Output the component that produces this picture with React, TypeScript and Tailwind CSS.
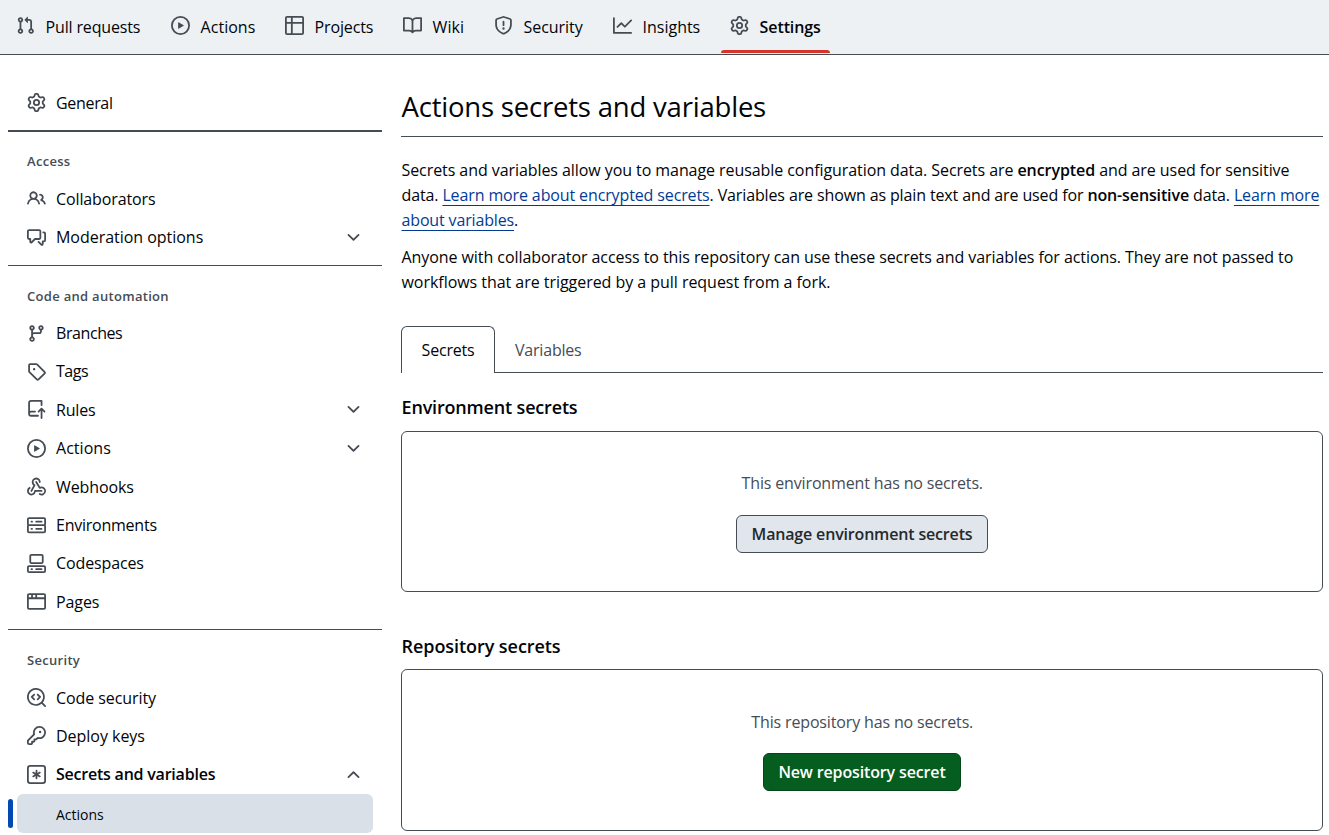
import clsx from "clsx";

// 16px icon outlines, drawn on a 16x16 grid
const icons = {
  pullRequest:
    "M1.5 3.25a2.25 2.25 0 1 1 3 2.122v5.256a2.251 2.251 0 1 1-1.5 0V5.372A2.25 2.25 0 0 1 1.5 3.25Zm5.677-.177L9.573.677A.25.25 0 0 1 10 .854V2.5h1A2.5 2.5 0 0 1 13.5 5v5.628a2.251 2.251 0 1 1-1.5 0V5a1 1 0 0 0-1-1h-1v1.646a.25.25 0 0 1-.427.177L7.177 3.427a.25.25 0 0 1 0-.354ZM3.75 2.5a.75.75 0 1 0 0 1.5.75.75 0 0 0 0-1.5Zm0 9.5a.75.75 0 1 0 0 1.5.75.75 0 0 0 0-1.5Zm8.25.75a.75.75 0 1 0 1.5 0 .75.75 0 0 0-1.5 0Z",
  play: "M8 0a8 8 0 1 1 0 16A8 8 0 0 1 8 0ZM1.5 8a6.5 6.5 0 1 0 13 0 6.5 6.5 0 0 0-13 0Zm4.879-2.773 4.264 2.559a.25.25 0 0 1 0 .428l-4.264 2.559A.25.25 0 0 1 6 10.559V5.442a.25.25 0 0 1 .379-.215Z",
  table:
    "M0 1.75C0 .784.784 0 1.75 0h12.5C15.216 0 16 .784 16 1.75v12.5A1.75 1.75 0 0 1 14.25 16H1.75A1.75 1.75 0 0 1 0 14.25ZM6.5 6.5v8h7.75a.25.25 0 0 0 .25-.25V6.5Zm8-1.5V1.75a.25.25 0 0 0-.25-.25H6.5V5Zm-13 1.5v7.75c0 .138.112.25.25.25H5v-8ZM5 5V1.5H1.75a.25.25 0 0 0-.25.25V5Z",
  book: "M0 1.75A.75.75 0 0 1 .75 1h4.253c1.227 0 2.317.59 3 1.501A3.743 3.743 0 0 1 11.006 1h4.245a.75.75 0 0 1 .75.75v10.5a.75.75 0 0 1-.75.75h-4.507a2.25 2.25 0 0 0-1.591.659l-.622.621a.75.75 0 0 1-1.06 0l-.622-.621A2.25 2.25 0 0 0 5.258 13H.75a.75.75 0 0 1-.75-.75Zm7.251 10.324.004-5.073-.002-2.253A2.25 2.25 0 0 0 5.003 2.5H1.5v9h3.757a3.75 3.75 0 0 1 1.994.574ZM8.755 4.75l-.004 7.322a3.752 3.752 0 0 1 1.992-.572H14.5v-9h-3.495a2.25 2.25 0 0 0-2.25 2.25Z",
  shield:
    "M7.467.133a1.748 1.748 0 0 1 1.066 0l5.25 1.68A1.75 1.75 0 0 1 15 3.48V7c0 1.566-.32 3.182-1.303 4.682-.983 1.498-2.585 2.813-5.032 3.855a1.697 1.697 0 0 1-1.33 0c-2.447-1.042-4.049-2.357-5.032-3.855C1.32 10.182 1 8.566 1 7V3.48a1.75 1.75 0 0 1 1.217-1.667Zm.61 1.429a.25.25 0 0 0-.153 0l-5.25 1.68a.25.25 0 0 0-.174.238V7c0 1.358.275 2.666 1.057 3.86.784 1.194 2.121 2.34 4.366 3.297a.196.196 0 0 0 .154 0c2.245-.956 3.582-2.104 4.366-3.298C13.225 9.666 13.5 8.36 13.5 7V3.48a.251.251 0 0 0-.174-.237l-5.25-1.68ZM8.75 4.75v3a.75.75 0 0 1-1.5 0v-3a.75.75 0 0 1 1.5 0ZM9 10.5a1 1 0 1 1-2 0 1 1 0 0 1 2 0Z",
  graph:
    "M1.5 1.75V13.5h13.75a.75.75 0 0 1 0 1.5H.75a.75.75 0 0 1-.75-.75V1.75a.75.75 0 0 1 1.5 0Zm14.28 2.53-5.25 5.25a.75.75 0 0 1-1.06 0L7 7.06 4.28 9.78a.751.751 0 0 1-1.042-.018.751.751 0 0 1-.018-1.042l3.25-3.25a.75.75 0 0 1 1.06 0L10 7.94l4.72-4.72a.751.751 0 0 1 1.042.018.751.751 0 0 1 .018 1.042Z",
  gear: "M8 0a8.2 8.2 0 0 1 .701.031C9.444.095 9.99.645 10.16 1.29l.288 1.107c.018.066.079.158.212.224.231.114.454.243.668.386.123.082.233.09.299.071l1.103-.303c.644-.176 1.392.021 1.82.63.27.385.506.792.704 1.218.315.675.111 1.422-.364 1.891l-.814.806c-.049.048-.098.147-.088.294.016.257.016.515 0 .772-.01.147.038.246.088.294l.814.806c.475.469.679 1.216.364 1.891a7.977 7.977 0 0 1-.704 1.217c-.428.61-1.176.807-1.82.63l-1.102-.302c-.067-.019-.177-.011-.3.071a5.909 5.909 0 0 1-.668.386c-.133.066-.194.158-.211.224l-.29 1.106c-.168.646-.715 1.196-1.458 1.26a8.006 8.006 0 0 1-1.402 0c-.743-.064-1.289-.614-1.458-1.26l-.289-1.106c-.018-.066-.079-.158-.212-.224a5.738 5.738 0 0 1-.668-.386c-.123-.082-.233-.09-.299-.071l-1.103.303c-.644.176-1.392-.021-1.82-.63a8.12 8.12 0 0 1-.704-1.218c-.315-.675-.111-1.422.363-1.891l.815-.806c.05-.048.098-.147.088-.294a6.214 6.214 0 0 1 0-.772c.01-.147-.038-.246-.088-.294l-.815-.806C.635 6.045.431 5.298.746 4.623a7.92 7.92 0 0 1 .704-1.217c.428-.61 1.176-.807 1.82-.63l1.102.302c.067.019.177.011.3-.071.214-.143.437-.272.668-.386.133-.066.194-.158.211-.224l.29-1.106C6.009.645 6.556.095 7.299.03 7.53.01 7.764 0 8 0Zm-.571 1.525c-.036.003-.108.036-.137.146l-.289 1.105c-.147.561-.549.967-.998 1.189-.173.086-.34.183-.5.29-.417.278-.97.423-1.529.27l-1.103-.303c-.109-.03-.175.016-.195.045-.22.312-.412.644-.573.99-.014.031-.021.11.059.19l.815.806c.411.406.562.957.53 1.456a4.709 4.709 0 0 0 0 .582c.032.499-.119 1.05-.53 1.456l-.815.806c-.081.08-.073.159-.059.19.162.346.353.677.573.989.02.03.085.076.195.046l1.102-.303c.56-.153 1.113-.008 1.53.27.161.107.328.204.501.29.447.222.85.629.997 1.189l.289 1.105c.029.109.101.143.137.146a6.6 6.6 0 0 0 1.142 0c.036-.003.108-.036.137-.146l.289-1.105c.147-.561.549-.967.998-1.189.173-.086.34-.183.5-.29.417-.278.97-.423 1.529-.27l1.103.303c.109.029.175-.016.195-.045.22-.313.411-.644.573-.99.014-.031.021-.11-.059-.19l-.815-.806c-.411-.406-.562-.957-.53-1.456a4.709 4.709 0 0 0 0-.582c-.032-.499.119-1.05.53-1.456l.815-.806c.081-.08.073-.159.059-.19a6.464 6.464 0 0 0-.573-.989c-.02-.03-.085-.076-.195-.046l-1.102.303c-.56.153-1.113.008-1.53-.27a4.44 4.44 0 0 0-.501-.29c-.447-.222-.85-.629-.997-1.189l-.289-1.105c-.029-.11-.101-.143-.137-.146a6.6 6.6 0 0 0-1.142 0ZM11 8a3 3 0 1 1-6 0 3 3 0 0 1 6 0ZM9.5 8a1.5 1.5 0 1 0-3.001.001A1.5 1.5 0 0 0 9.5 8Z",
  people:
    "M2 5.5a3.5 3.5 0 1 1 5.898 2.549 5.508 5.508 0 0 1 3.034 4.084.75.75 0 1 1-1.482.235 4 4 0 0 0-7.9 0 .75.75 0 0 1-1.482-.236A5.507 5.507 0 0 1 3.102 8.05 3.493 3.493 0 0 1 2 5.5ZM11 4a3.001 3.001 0 0 1 2.22 5.018 5.01 5.01 0 0 1 2.56 3.012.749.749 0 0 1-.885.954.752.752 0 0 1-.549-.514 3.507 3.507 0 0 0-2.522-2.372.75.75 0 0 1-.574-.73v-.352a.75.75 0 0 1 .416-.672A1.5 1.5 0 0 0 11 5.5.75.75 0 0 1 11 4Zm-5.5-.5a2 2 0 1 0-.001 3.999A2 2 0 0 0 5.5 3.5Z",
  discussion:
    "M1.75 1h8.5c.966 0 1.75.784 1.75 1.75v5.5A1.75 1.75 0 0 1 10.25 10H7.061l-2.574 2.573A1.458 1.458 0 0 1 2 11.543V10h-.25A1.75 1.75 0 0 1 0 8.25v-5.5C0 1.784.784 1 1.75 1ZM1.5 2.75v5.5c0 .138.112.25.25.25h1a.75.75 0 0 1 .75.75v2.19l2.72-2.72a.749.749 0 0 1 .53-.22h3.5a.25.25 0 0 0 .25-.25v-5.5a.25.25 0 0 0-.25-.25h-8.5a.25.25 0 0 0-.25.25Zm13 2a.25.25 0 0 0-.25-.25h-.5a.75.75 0 0 1 0-1.5h.5c.966 0 1.75.784 1.75 1.75v5.5A1.75 1.75 0 0 1 14.25 12H14v1.543a1.458 1.458 0 0 1-2.487 1.03L9.22 12.28a.749.749 0 0 1 .326-1.275.749.749 0 0 1 .734.215l2.22 2.22v-2.19a.75.75 0 0 1 .75-.75h1a.25.25 0 0 0 .25-.25Z",
  branch:
    "M9.5 3.25a2.25 2.25 0 1 1 3 2.122V6A2.5 2.5 0 0 1 10 8.5H6a1 1 0 0 0-1 1v1.128a2.251 2.251 0 1 1-1.5 0V5.372a2.25 2.25 0 1 1 1.5 0v1.836A2.493 2.493 0 0 1 6 7h4a1 1 0 0 0 1-1v-.628A2.25 2.25 0 0 1 9.5 3.25Zm-6 0a.75.75 0 1 0 1.5 0 .75.75 0 0 0-1.5 0Zm8.25-.75a.75.75 0 1 0 0 1.5.75.75 0 0 0 0-1.5ZM4.25 12a.75.75 0 1 0 0 1.5.75.75 0 0 0 0-1.5Z",
  tag: "M1 7.775V2.75C1 1.784 1.784 1 2.75 1h5.025c.464 0 .91.184 1.238.513l6.25 6.25a1.75 1.75 0 0 1 0 2.474l-5.026 5.026a1.75 1.75 0 0 1-2.474 0l-6.25-6.25A1.752 1.752 0 0 1 1 7.775Zm1.5 0c0 .066.026.13.073.177l6.25 6.25a.25.25 0 0 0 .354 0l5.025-5.025a.25.25 0 0 0 0-.354l-6.25-6.25a.25.25 0 0 0-.177-.073H2.75a.25.25 0 0 0-.25.25ZM6 5a1 1 0 1 1 0 2 1 1 0 0 1 0-2Z",
  repoPush:
    "M1 2.5A2.5 2.5 0 0 1 3.5 0h8.75a.75.75 0 0 1 .75.75v3.5a.75.75 0 0 1-1.5 0V1.5h-8a1 1 0 0 0-1 1v6.708A2.493 2.493 0 0 1 3.5 9h3.25a.75.75 0 0 1 0 1.5H3.5a1 1 0 0 0 0 2h5.75a.75.75 0 0 1 0 1.5H3.5A2.5 2.5 0 0 1 1 11.5Zm13.23 7.79h-.001l-1.224-1.224v6.184a.75.75 0 0 1-1.5 0V9.066L10.28 10.29a.75.75 0 0 1-1.06-1.061l2.505-2.504a.75.75 0 0 1 1.06 0L15.29 9.23a.751.751 0 0 1-.018 1.042.751.751 0 0 1-1.042.018Z",
  webhook:
    "M5.5 4.25a2.25 2.25 0 0 1 4.5 0 .75.75 0 0 0 1.5 0 3.75 3.75 0 1 0-6.14 2.889l-2.272 4.258a.75.75 0 0 0 1.324.706L7 7.25a.75.75 0 0 0-.309-1.015A2.25 2.25 0 0 1 5.5 4.25ZM7.364 3.607a.75.75 0 0 1 1.03.257l2.608 4.349a3.75 3.75 0 1 1-.628 6.785.75.75 0 0 1 .752-1.299 2.25 2.25 0 1 0-.033-3.88.75.75 0 0 1-1.03-.256L7.107 4.636a.75.75 0 0 1 .257-1.03ZM2.9 8.776A.75.75 0 0 1 2.625 9.8 2.25 2.25 0 1 0 6 11.75a.75.75 0 0 1 .75-.751h5.5a.75.75 0 0 1 0 1.5H7.425a3.75 3.75 0 1 1-5.55-3.998.75.75 0 0 1 1.024.274Z",
  server:
    "M1.75 1h12.5c.966 0 1.75.784 1.75 1.75v4c0 .372-.116.717-.314 1 .198.283.314.628.314 1v4a1.75 1.75 0 0 1-1.75 1.75H1.75A1.75 1.75 0 0 1 0 12.75v-4c0-.358.109-.707.314-1a1.739 1.739 0 0 1-.314-1v-4C0 1.784.784 1 1.75 1ZM1.5 2.75v4c0 .138.112.25.25.25h12.5a.25.25 0 0 0 .25-.25v-4a.25.25 0 0 0-.25-.25H1.75a.25.25 0 0 0-.25.25Zm.25 5.75a.25.25 0 0 0-.25.25v4c0 .138.112.25.25.25h12.5a.25.25 0 0 0 .25-.25v-4a.25.25 0 0 0-.25-.25ZM7 4.75A.75.75 0 0 1 7.75 4h4.5a.75.75 0 0 1 0 1.5h-4.5A.75.75 0 0 1 7 4.75ZM7.75 10h4.5a.75.75 0 0 1 0 1.5h-4.5a.75.75 0 0 1 0-1.5ZM3 4.75A.75.75 0 0 1 3.75 4h.5a.75.75 0 0 1 0 1.5h-.5A.75.75 0 0 1 3 4.75ZM3.75 10h.5a.75.75 0 0 1 0 1.5h-.5a.75.75 0 0 1 0-1.5Z",
  codespaces:
    "M0 11.25c0-.966.784-1.75 1.75-1.75h12.5c.966 0 1.75.784 1.75 1.75v3A1.75 1.75 0 0 1 14.25 16H1.75A1.75 1.75 0 0 1 0 14.25Zm2-9.5C2 .784 2.784 0 3.75 0h8.5C13.216 0 14 .784 14 1.75v5a1.75 1.75 0 0 1-1.75 1.75h-8.5A1.75 1.75 0 0 1 2 6.75Zm1.75-.25a.25.25 0 0 0-.25.25v5c0 .138.112.25.25.25h8.5a.25.25 0 0 0 .25-.25v-5a.25.25 0 0 0-.25-.25Zm-2 9.5a.25.25 0 0 0-.25.25v3c0 .138.112.25.25.25h12.5a.25.25 0 0 0 .25-.25v-3a.25.25 0 0 0-.25-.25ZM7 12.75a.75.75 0 0 1 .75-.75h4.5a.75.75 0 0 1 0 1.5h-4.5a.75.75 0 0 1-.75-.75Zm-4 0a.75.75 0 0 1 .75-.75h.5a.75.75 0 0 1 0 1.5h-.5a.75.75 0 0 1-.75-.75Z",
  browser:
    "M0 2.75C0 1.784.784 1 1.75 1h12.5c.966 0 1.75.784 1.75 1.75v10.5A1.75 1.75 0 0 1 14.25 15H1.75A1.75 1.75 0 0 1 0 13.25ZM14.5 6h-13v7.25c0 .138.112.25.25.25h12.5a.25.25 0 0 0 .25-.25Zm-6-3.5v2h6V2.75a.25.25 0 0 0-.25-.25ZM5 2.5v2h2v-2Zm-3.25 0a.25.25 0 0 0-.25.25V4.5h2v-2Z",
  codescan:
    "M8.47 4.97a.75.75 0 0 0 0 1.06L9.94 7.5 8.47 8.97a.75.75 0 1 0 1.06 1.06l2-2a.75.75 0 0 0 0-1.06l-2-2a.75.75 0 0 0-1.06 0ZM6.53 6.03a.75.75 0 0 0-1.06-1.06l-2 2a.75.75 0 0 0 0 1.06l2 2a.75.75 0 1 0 1.06-1.06L5.06 7.5l1.47-1.47ZM12.246 13.307a7.501 7.501 0 1 1 1.06-1.06l2.474 2.473a.749.749 0 0 1-.326 1.275.749.749 0 0 1-.734-.215ZM1.5 7.5a6.002 6.002 0 0 0 3.608 5.504 6.002 6.002 0 0 0 6.486-1.117.748.748 0 0 1 .292-.293A6 6 0 1 0 1.5 7.5Z",
  key: "M10.5 0a5.499 5.499 0 1 1-1.288 10.848l-.932.932a.749.749 0 0 1-.53.22H7v.75a.749.749 0 0 1-.22.53l-.5.5a.749.749 0 0 1-.53.22H5v.75a.749.749 0 0 1-.22.53l-.5.5a.749.749 0 0 1-.53.22h-2A1.75 1.75 0 0 1 0 14.25v-2c0-.199.079-.389.22-.53l4.932-4.932A5.5 5.5 0 0 1 10.5 0Zm-4 5.5c-.001.431.069.86.205 1.269a.75.75 0 0 1-.181.768L1.5 12.56v1.69c0 .138.112.25.25.25h1.69l.06-.06v-1.19a.75.75 0 0 1 .75-.75h1.19l.06-.06v-1.19a.75.75 0 0 1 .75-.75h1.19l1.023-1.025a.75.75 0 0 1 .768-.18A4 4 0 1 0 6.5 5.5ZM11 6a1 1 0 1 1 0-2 1 1 0 0 1 0 2Z",
  asterisk:
    "M0 2.75A2.75 2.75 0 0 1 2.75 0h10.5A2.75 2.75 0 0 1 16 2.75v10.5A2.75 2.75 0 0 1 13.25 16H2.75A2.75 2.75 0 0 1 0 13.25ZM2.75 1.5c-.69 0-1.25.56-1.25 1.25v10.5c0 .69.56 1.25 1.25 1.25h10.5c.69 0 1.25-.56 1.25-1.25V2.75c0-.69-.56-1.25-1.25-1.25ZM8 4a.75.75 0 0 1 .75.75V6.7l1.69-.975a.75.75 0 0 1 .75 1.3L9.5 8l1.69.976a.75.75 0 0 1-.75 1.298L8.75 9.3v1.951a.75.75 0 0 1-1.5 0V9.299l-1.69.976a.75.75 0 0 1-.75-1.3L6.5 8l-1.69-.975a.75.75 0 0 1 .75-1.3l1.69.976V4.75A.75.75 0 0 1 8 4Z",
  chevron:
    "M12.78 5.22a.749.749 0 0 1 0 1.06l-4.25 4.25a.749.749 0 0 1-1.06 0L3.22 6.28a.749.749 0 1 1 1.06-1.06L8 8.939l3.72-3.719a.749.749 0 0 1 1.06 0Z",
};

type IconName = keyof typeof icons;

function Icon({ name, className }: { name: IconName; className?: string }) {
  return (
    <svg
      viewBox="0 0 16 16"
      className={clsx("size-[19px] shrink-0 fill-[#454c54]", className)}
    >
      <path d={icons[name]} />
    </svg>
  );
}

interface TabProps {
  icon: IconName;
  label: string;
  className: string;
  active?: boolean;
}

const tabs: TabProps[] = [
  { icon: "pullRequest", label: "Pull requests", className: "w-[155px] tracking-[-0.16px]" },
  { icon: "play", label: "Actions", className: "w-[114px] tracking-[0.02px]" },
  { icon: "table", label: "Projects", className: "w-[118px] tracking-[-0.14px]" },
  { icon: "book", label: "Wiki", className: "w-[91px] tracking-[0.1px]" },
  { icon: "shield", label: "Security", className: "w-[119px] tracking-[-0.06px]" },
  { icon: "graph", label: "Insights", className: "w-[117px] tracking-[-0.02px]" },
  { icon: "gear", label: "Settings", className: "w-[109px] tracking-[-0.1px]", active: true },
];

function Tab({ icon, label, className, active }: TabProps) {
  return (
    <a className={clsx("relative flex h-[53px] items-center pl-[9px]", className)}>
      <Icon name={icon} className="mr-[10.6px] -mt-[2px]" />
      <span className={clsx(active && "font-semibold")}>{label}</span>
      {active && (
        <span className="absolute inset-x-0 bottom-0 h-[3px] rounded-t-sm bg-[#d5342a]" />
      )}
    </a>
  );
}

interface NavItemProps {
  icon: IconName;
  label: string;
  chevron?: "up" | "down";
  className?: string;
}

function NavItem({ icon, label, chevron, className }: NavItemProps) {
  return (
    <li className="flex h-[38.4px] items-center pr-[19px] pl-[19px]">
      <Icon name={icon} className="mr-[10px]" />
      <span className={clsx("flex-1", className ?? "tracking-[-0.2px]")}>{label}</span>
      {chevron && <Icon name="chevron" className={clsx(chevron === "up" && "rotate-180")} />}
    </li>
  );
}

function NavTitle({ children }: { children: string }) {
  return (
    <h3 className="flex h-[38px] items-center pl-[19px] text-[13px] font-semibold tracking-[0.3px] text-[#454c54]">
      {children}
    </h3>
  );
}

function Sidebar() {
  return (
    <aside className="ml-2 w-[374px] shrink-0 pt-[29.3px]">
      <ul>
        <NavItem icon="gear" label="General" className="tracking-[-0.32px]" />
      </ul>
      <div className="mt-[8.3px] h-[2px] bg-[#454c54]" />

      <div className="pt-[10px]">
        <NavTitle>Access</NavTitle>
        <ul className="-mt-[1px]">
          <NavItem icon="people" label="Collaborators" className="tracking-[-0.12px]" />
          <NavItem
            icon="discussion"
            label="Moderation options"
            chevron="down"
            className="tracking-[-0.03px]"
          />
        </ul>
      </div>
      <div className="mt-[9.2px] h-px bg-[#454c54]" />

      <div className="pt-[10.8px]">
        <NavTitle>Code and automation</NavTitle>
        <ul className="-mt-[1.4px]">
          <NavItem icon="branch" label="Branches" className="tracking-[-0.42px]" />
          <NavItem icon="tag" label="Tags" className="tracking-[-0.45px]" />
          <NavItem icon="repoPush" label="Rules" chevron="down" />
          <NavItem icon="play" label="Actions" chevron="down" className="tracking-[0.03px]" />
          <NavItem icon="webhook" label="Webhooks" className="tracking-[-0.1px]" />
          <NavItem icon="server" label="Environments" className="tracking-[-0.24px]" />
          <NavItem icon="codespaces" label="Codespaces" className="tracking-[-0.12px]" />
          <NavItem icon="browser" label="Pages" className="tracking-[-0.1px]" />
        </ul>
      </div>
      <div className="mt-[8.4px] h-px bg-[#454c54]" />

      <div className="pt-[11.4px]">
        <NavTitle>Security</NavTitle>
        <ul className="-mt-[1.4px]">
          <NavItem icon="codescan" label="Code security" className="tracking-[-0.08px]" />
          <NavItem icon="key" label="Deploy keys" className="tracking-[-0.03px]" />
          <NavItem
            icon="asterisk"
            label="Secrets and variables"
            chevron="up"
            className="font-semibold tracking-[-0.22px]"
          />
          <li className="flex h-[39px] items-center gap-1">
            <span className="h-[29px] w-[5px] rounded-sm bg-[#0349b4]" />
            <span className="flex h-full w-[356px] items-center rounded-md bg-[#dae0e7] pt-[2px] pl-[39px] text-[14px]">
              Actions
            </span>
          </li>
        </ul>
      </div>
    </aside>
  );
}

function Link({ children }: { children: string }) {
  return (
    <a className="text-[#023b95] underline decoration-1 underline-offset-[4px] [text-decoration-skip-ink:none]">
      {children}
    </a>
  );
}

interface SecretsBoxProps {
  text: string;
  className: string;
  children: React.ReactNode;
}

function SecretsBox({ text, className, children }: SecretsBoxProps) {
  return (
    <div
      className={clsx(
        "flex flex-col items-center rounded-md border border-[#454c54] text-[#454c54]",
        className
      )}
    >
      <p className="h-[26px] pl-[0.5px] leading-[26px] tracking-[-0.15px]">{text}</p>
      {children}
    </div>
  );
}

export default function App() {
  return (
    <div className="h-[835px] w-[1329px] overflow-hidden bg-white font-['Open_Sans','Noto_Sans',sans-serif] text-[16px] whitespace-nowrap text-[#010409]">
      <nav className="flex h-[54.5px] border-b border-[#454c54] bg-[#edf1f4] pl-[7px]">
        {tabs.map((tab) => (
          <Tab key={tab.label} {...tab} />
        ))}
      </nav>

      <div className="flex">
        <Sidebar />

        <main className="ml-[19px] w-[922px]">
          <h1 className="flex h-[82px] items-center border-b border-[#454c54] pt-[23px] pl-[0.5px] text-[27.5px] tracking-[-0.2px]">
            Actions secrets and variables
          </h1>

          <div className="pt-[21px] pl-[0.5px] leading-[25px]">
            <p className="tracking-[-0.07px]">
              Secrets and variables allow you to manage reusable configuration data. Secrets are{" "}
              <b className="font-semibold">encrypted</b> and are used for sensitive
            </p>
            <p className="tracking-[-0.125px]">
              data. <Link>Learn more about encrypted secrets</Link>. Variables are shown as plain
              text and are used for <b className="font-semibold">non-sensitive</b> data.{" "}
              <Link>Learn more</Link>
            </p>
            <p className="tracking-[-0.15px]">
              <Link>about variables</Link>.
            </p>
            <p className="mt-3 tracking-[-0.07px]">
              Anyone with collaborator access to this repository can use these secrets and variables
              for actions. They are not passed to
            </p>
            <p className="tracking-[-0.04px]">
              workflows that are triggered by a pull request from a fork.
            </p>
          </div>

          <div className="mt-[31px] flex h-[47px] tracking-[-0.2px]">
            <div className="flex w-[94px] items-center justify-center rounded-t-md border border-b-0 border-[#454c54]">
              Secrets
            </div>
            <div className="flex flex-1 items-center border-b border-[#454c54] pt-[2px] pl-5 text-[#454c54]">
              Variables
            </div>
          </div>

          <h2 className="mt-[21px] mb-[10px] h-[27px] pl-[0.5px] text-[18px] leading-[27px] font-semibold tracking-[-0.17px]">
            Environment secrets
          </h2>
          <SecretsBox text="This environment has no secrets." className="h-[161px] pt-[38px]">
            <button className="mt-[19px] h-[38px] w-[252px] rounded-md border border-[#454c54] bg-[#e0e6eb] font-semibold tracking-[-0.17px] text-[#25292e]">
              Manage environment secrets
            </button>
          </SecretsBox>

          <h2 className="mt-[41px] mb-[9px] h-[27px] pl-[0.5px] text-[18px] leading-[27px] font-semibold tracking-[-0.06px]">
            Repository secrets
          </h2>
          <SecretsBox text="This repository has no secrets." className="h-[162px] pt-[39px]">
            <button className="mt-[18px] h-[38px] w-[198px] rounded-md border border-[#04461a] bg-[#055d20] font-semibold tracking-[-0.14px] text-white">
              New repository secret
            </button>
          </SecretsBox>
        </main>
      </div>
    </div>
  );
}
